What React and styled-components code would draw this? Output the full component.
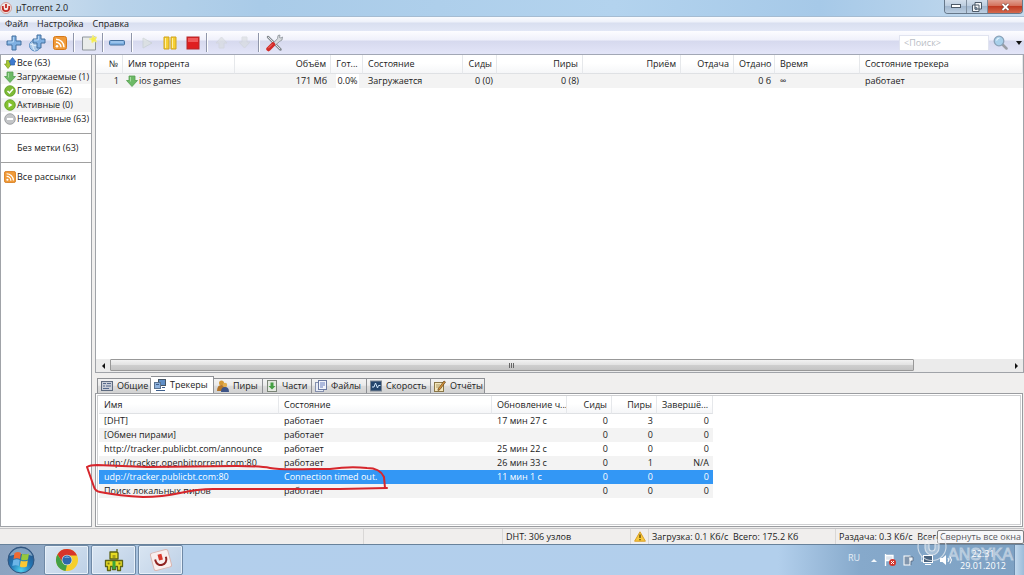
import React from "react";
import styled, { createGlobalStyle } from "styled-components";

const GlobalStyle = createGlobalStyle`
  *, *::before, *::after { box-sizing: border-box; }
  body { margin: 0; background: #f0efee; }
  body, button, input, table {
    font-family: "Open Sans", "Noto Sans", sans-serif;
    font-size: 9px;
    line-height: 14px;
    color: #222;
  }
  button { margin: 0; padding: 0; border: 0; background: none; text-align: left; white-space: nowrap; }
  svg { display: block; flex: none; }
`;

const Desktop = styled.div`
  display: flex;
  flex-direction: column;
  min-height: 100vh;
  overflow: hidden;
`;

/* ---------- window chrome ---------- */
const TitleBar = styled.header`
  display: flex;
  align-items: flex-start;
  height: 17px;
  background: linear-gradient(90deg, #d3e1ef 0, #b9d3ea 110px, #a9cbe8 260px, #b3d3ee 60%, #a6c9e8 80%, #c6dbee 100%);
  border-bottom: 1px solid #a5bcd2;
`;
const TitleText = styled.h1`
  flex: 1;
  margin: 0;
  padding-left: 4px;
  font-size: 9px;
  font-weight: 400;
  line-height: 16px;
`;
const TitleIcon = styled.span`
  padding-top: 2px;
`;
const WindowButtons = styled.div`
  display: flex;
  margin-right: 1px;
  border: 1px solid #66788a;
  border-top: 0;
  border-radius: 0 0 4px 4px;
  overflow: hidden;
`;
const WindowButton = styled.button`
  display: flex;
  align-items: center;
  justify-content: center;
  width: ${(p) => (p.$close ? 35 : 21)}px;
  height: 13px;
  border-left: ${(p) => (p.$first ? 0 : "1px solid #7f8e9e")};
  background: ${(p) =>
    p.$close
      ? "linear-gradient(#e0a193, #d4705b 45%, #c03a22 50%, #d4694d)"
      : "linear-gradient(#d3dfec, #bccddf 45%, #a2b7ce 50%, #bccfe2)"};
`;
const MenuBar = styled.nav`
  display: flex;
  gap: 9px;
  height: 14px;
  padding-left: 5px;
  background: linear-gradient(#fafbfe 0, #eef1fa 5px, #d9dff0 6px, #e2e7f6);
`;
const MenuItem = styled.button`
  line-height: 14px;
`;
const Toolbar = styled.div`
  display: flex;
  align-items: center;
  height: 24px;
  padding: 0 2px;
  background: linear-gradient(#fdfdff 0, #eff0fb 9px, #d6d9ee 10px, #e3e5f8);
  border-bottom: 1px solid #a2a7b5;
`;
const ToolButton = styled.button`
  display: flex;
  align-items: center;
  justify-content: center;
  width: 23px;
  height: 20px;
  opacity: ${(p) => (p.disabled ? 0.6 : 1)};
`;
const ToolSeparator = styled.span`
  width: 6px;
  height: 19px;
  background: linear-gradient(90deg, transparent 2px, #8f96aa 2px, #8f96aa 3px, #fff 3px, #fff 4px, transparent 4px);
`;
const Spacer = styled.span`
  flex: 1;
`;
const SearchBox = styled.input`
  width: 90px;
  height: 16px;
  padding: 0 4px;
  border: 1px solid #e1e4f0;
  background: #fff;
  outline: 0;
  &::placeholder { color: #b9bdc5; opacity: 1; }
`;
const SearchButton = styled.button`
  display: flex;
  align-items: center;
  gap: 8px;
  margin-left: 4px;
`;

/* ---------- body ---------- */
const Body = styled.div`
  display: flex;
  flex: 1;
  gap: 3px;
  background: #f0efee;
`;
const Sidebar = styled.aside`
  width: 92px;
  padding-top: 1px;
  margin-bottom: 1px;
  background: #fff;
  border: 1px solid #a0a3a8;
  border-top: 0;
`;
const SideItem = styled.button`
  display: flex;
  align-items: center;
  gap: 1px;
  width: 100%;
  height: 14px;
  padding-left: ${(p) => (p.$plain ? 16 : 3)}px;
  background: ${(p) => (p.$shade ? "#f4f4f4" : "transparent")};
`;
const SideRule = styled.hr`
  height: 1px;
  margin: 7px 0;
  border: 0;
  background: #a0a0a0;
`;
const Main = styled.main`
  display: flex;
  flex-direction: column;
  flex: 1;
  min-width: 0;
`;
const TorrentPane = styled.section`
  display: flex;
  flex-direction: column;
  flex: 1;
  background: #fff;
  border: 1px solid #a0a3a8;
  border-top: 0;
`;
const PaneFill = styled.div`
  flex: 1;
`;

const Table = styled.table`
  width: ${(p) => (p.$width ? p.$width + "px" : "100%")};
  border-collapse: separate;
  border-spacing: 0;
  table-layout: fixed;
  th, td {
    padding: 0 4px 0 5px;
    font-weight: 400;
    white-space: nowrap;
    overflow: hidden;
  }
`;
const HeadCell = styled.th`
  height: ${(p) => p.$height}px;
  text-align: ${(p) => p.$align || "left"};
  background: linear-gradient(#fff 45%, #f5f6f8);
  border-right: 1px solid #e6e8eb;
  border-bottom: 1px solid #dfe1e4;
`;
const Cell = styled.td`
  height: 14px;
  text-align: ${(p) => p.$align || "left"};
`;
const Row = styled.tr`
  background: ${(p) => (p.$selected ? "#3397f5" : p.$shade ? "#f3f3f3" : "#fff")};
  td { color: ${(p) => (p.$selected ? "#fff" : "#222")}; }
`;
const NameWithIcon = styled.span`
  display: flex;
  align-items: center;
  gap: 1px;
  margin-left: -2px;
`;
const Progress = styled.span`
  display: block;
  background: #fff;
`;

const ScrollBar = styled.div`
  display: flex;
  height: 13px;
  background: #ebebeb;
`;
const ScrollArrow = styled.button`
  display: flex;
  align-items: center;
  justify-content: center;
  width: 14px;
`;
const ScrollTrack = styled.div`
  flex: 1;
  display: flex;
`;
const ScrollThumb = styled.div`
  display: flex;
  align-items: center;
  justify-content: center;
  width: 89.4%;
  margin-bottom: 1px;
  border: 1px solid #989898;
  border-radius: 1px;
  background: linear-gradient(#f2f2f2, #e3e3e3 45%, #cfcfcf 50%, #c4c4c4);
`;

const DetailPane = styled.section`
  padding-top: 3px;
`;
const TabStrip = styled.div`
  display: flex;
  align-items: flex-end;
  height: 17px;
  padding-left: 2px;
`;
const Tab = styled.button`
  display: flex;
  align-items: center;
  gap: 4px;
  width: ${(p) => p.$width}px;
  height: ${(p) => (p.$active ? 17 : 15)}px;
  padding-left: 3px;
  border: 1px solid #8e9094;
  border-bottom: 0;
  border-left-width: ${(p) => (p.$first ? 1 : 0)}px;
  background: ${(p) => (p.$active ? "#fff" : "linear-gradient(#f3f3f3, #ebebeb 45%, #dcdcdc 50%, #d2d2d2)")};
`;
const TrackerPanel = styled.div`
  position: relative;
  height: 134px;
  margin: 0 1px 1px 0;
  padding: 2px 3px;
  background: #fff;
  border: 1px solid #9a9ca0;
  outline: 1px solid #cfd0d2;
  outline-offset: -3px;
`;
const Marker = styled.svg`
  position: absolute;
  left: -12px;
  top: 66px;
  overflow: visible;
  pointer-events: none;
`;

/* ---------- status bar ---------- */
const StatusBar = styled.footer`
  display: flex;
  position: relative;
  height: 17px;
  background: #f0eeed;
  border-top: 1px solid #c4c4c6;
  border-bottom: 1px solid #68829b;
`;
const StatusCell = styled.div`
  display: flex;
  align-items: center;
  ${(p) => (p.$grow ? "flex: 1;" : `width: ${p.$width}px;`)}
  padding-left: 3px;
  border-right: 1px solid #d9d7d6;
  white-space: pre;
  overflow: hidden;
`;
const Tooltip = styled.div`
  position: absolute;
  right: 0;
  bottom: 0;
  padding: 0 2px;
  border: 1px solid #7e7e80;
  border-radius: 2px;
  background: #f7f7f9;
  color: #5a5a60;
  line-height: 12px;
  white-space: nowrap;
`;

/* ---------- taskbar ---------- */
const TaskBar = styled.footer`
  display: flex;
  position: relative;
  gap: 2px;
  height: 30px;
  background: linear-gradient(90deg, #8ca3c0 0, #8fa8c5 44px, #b3cfec 182px, #b2cfec 76%, #86a9cb 84%, #7da1c3 100%);
`;
const StartButton = styled.button`
  display: flex;
  justify-content: center;
  align-items: center;
  width: 42px;
`;
const TaskButton = styled.button`
  display: flex;
  align-items: center;
  justify-content: center;
  width: 45px;
  border: 1px solid #6f89a6;
  border-radius: 2px;
  box-shadow: inset 0 0 0 1px #e7f0f9;
  background: linear-gradient(135deg, #d9e5f2, #bdd0e6);
`;
const Tray = styled.div`
  display: flex;
  align-items: center;
  gap: 7px;
  color: #fff;
`;
const Language = styled.span`
  margin-right: 4px;
  color: #e6eef6;
  line-height: 18px;
  padding-bottom: 4px;
`;
const Clock = styled.time`
  width: 46px;
  margin-right: 6px;
  white-space: nowrap;
  text-align: center;
  color: #fff;
  line-height: 12px;
`;
const ShowDesktop = styled.button`
  width: 10px;
  border-left: 1px solid #6b8cae;
  background: linear-gradient(90deg, #c2d9ee, #9cbcd9);
`;
const Watermark = styled.div`
  position: absolute;
  right: 11px;
  top: -16px;
  display: flex;
  align-items: flex-end;
  color: rgba(255, 255, 255, 0.2);
  font-family: "Liberation Sans", sans-serif;
  font-size: 16px;
  line-height: 20px;
  -webkit-text-stroke: 1px rgba(235, 240, 246, 0.5);
  pointer-events: none;
`;

/* ---------- icons ---------- */
const Logo = ({ size = 11 }) => (
  <svg width={size} height={size} viewBox="0 0 12 12">
    <circle cx="6" cy="6" r="5.5" fill="#f3e9e7" stroke="#c98a84" strokeWidth=".8" />
    <path d="M2.800 4v2a3.200 3.200 0 0 0 6.400 0V4M6 2v4" fill="none" stroke="#c32c25" strokeWidth="1.800" />
  </svg>
);
const Plus = ({ globe }) => (
  <svg width="18" height="18" viewBox="0 0 18 18">
    {globe && (
      <g>
        <circle cx="7" cy="11.500" r="5.500" fill="#a9c8e8" stroke="#5d8fc4" />
        <path d="M2 10q5 3 10 1M6 6q-3 6 1 11" fill="none" stroke="#e3f0fb" />
      </g>
    )}
    <path
      d={globe ? "M9 1h4v4h4v4h-4v5H9V9H5V5h4z" : "M7 2h4v5h5v4h-5v5H7v-5H2V7h5z"}
      fill="#7fb0e2" stroke="#45719f" strokeLinejoin="round"
    />
    <path d={globe ? "M10.500 2v4H6" : "M8.500 3v5H3"} fill="none" stroke="#b5d5f4" />
  </svg>
);
const Rss = ({ size }) => (
  <svg width={size} height={size} viewBox="0 0 14 14">
    <rect x=".5" y=".5" width="13" height="13" rx="2" fill="#f09a38" stroke="#d57819" />
    <circle cx="4" cy="10.200" r="1.300" fill="#fff" />
    <path d="M3 6.300a5 5 0 0 1 5 5M3 3.200a8 8 0 0 1 8 8" fill="none" stroke="#fff" strokeWidth="1.400" />
  </svg>
);
const NewDoc = () => (
  <svg width="16" height="16" viewBox="0 0 16 16">
    <path d="M1.500 2h13v13h-13z" fill="#e9ecea" stroke="#8f969c" />
    <path d="M12 0l1 2.500 3-.5-1.500 2.500L16 7l-3-.5L11 8l-.5-3L8 4l3-1z" fill="#f6ee4a" stroke="#f3f08e" strokeWidth=".8" />
  </svg>
);
const Minus = () => (
  <svg width="17" height="6" viewBox="0 0 17 6">
    <rect x=".5" y=".5" width="15" height="4.500" rx="1" fill="#7fb0e2" stroke="#45719f" />
    <path d="M2 2h12" stroke="#b5d5f4" />
  </svg>
);
const Play = () => (
  <svg width="12" height="12" viewBox="0 0 12 12">
    <path d="M2 1l9 5-9 5z" fill="#dde3dc" stroke="#c4cdca" />
  </svg>
);
const Pause = () => (
  <svg width="14" height="14" viewBox="0 0 14 14">
    <path d="M1 1h5v12H1zM8 1h5v12H8z" fill="#f6cf32" stroke="#cfa31d" />
    <path d="M2.500 2v10M9.500 2v10" stroke="#fff0a0" />
  </svg>
);
const Stop = () => (
  <svg width="14" height="14" viewBox="0 0 14 14">
    <rect x="1" y="1" width="12" height="12" fill="#df1f20" stroke="#b3292a" />
    <path d="M2 2h10v4H2z" fill="#f0595a" />
  </svg>
);
const Move = ({ down }) => (
  <svg width="13" height="13" viewBox="0 0 13 13">
    <path d={down ? "M6.500 12L1 6h3V1h5v5h3z" : "M6.500 1L1 7h3v5h5V7h3z"} fill="#d9ddde" stroke="#cfd3d6" />
  </svg>
);
const Tools = () => (
  <svg width="18" height="18" viewBox="0 0 18 18">
    <path d="M3 3l8 8 4.500 4.500" stroke="#858b91" strokeWidth="2.500" strokeLinecap="round" />
    <path d="M3 3l12 12" stroke="#e0e3e6" strokeWidth="1" />
    <path d="M8.500 9l4-4.500L13 1.500l2-.5-.5 2.500 1.500.5 1.500-1-.5 3-2.500 1.500-4.500 4z" fill="#d7dade" stroke="#80868c" strokeWidth=".7" />
    <path d="M8 10.500L3.500 15" stroke="#d32a27" strokeWidth="4.500" strokeLinecap="round" />
    <path d="M7 10.500L3.500 14" stroke="#ef7a72" strokeWidth="1" strokeLinecap="round" />
  </svg>
);
const Magnifier = () => (
  <svg width="15" height="15" viewBox="0 0 15 15">
    <path d="M9 9l4.500 4.500" stroke="#9a9ea5" strokeWidth="2.500" strokeLinecap="round" />
    <circle cx="6" cy="6" r="4.800" fill="#a8d0ea" stroke="#8aa2b8" strokeWidth="1.300" />
    <path d="M3.500 5.500q1-2.500 3-2.500" fill="none" stroke="#e9f6ff" strokeWidth="1.200" />
  </svg>
);
const Triangle = ({ d, w = 6, h = 4, fill = "#111" }) => (
  <svg width={w} height={h} viewBox={`0 0 ${w} ${h}`}><path d={d} fill={fill} /></svg>
);
const Down = ({ size = 12 }) => (
  <svg width={size} height={size} viewBox="0 0 12 12">
    <path d="M3 1h6v4.500h2.500L6 11.500.5 5.500H3z" fill="#6dba66" stroke="#559f50" strokeWidth=".8" strokeLinejoin="round" />
    <path d="M4.500 2v4.500" stroke="#a6dba0" />
  </svg>
);
const AllIcon = () => (
  <svg width="12" height="12" viewBox="0 0 12 12">
    <path d="M2.500 3.500h3v3.500H7.500L4 11.500.5 7h2z" fill="#a8c833" stroke="#7a9a23" strokeWidth=".7" />
    <path d="M6.500 8V5H5L8.500.5 12 5h-1.500v3z" fill="#3d7bd0" stroke="#2b5da6" strokeWidth=".7" />
  </svg>
);
const Dot = ({ color, edge, children }) => (
  <svg width="12" height="12" viewBox="0 0 12 12">
    <circle cx="6" cy="6" r="5.300" fill={color} stroke={edge} strokeWidth=".8" />
    {children}
  </svg>
);
const tabIcons = {
  general: (
    <g>
      <rect x=".5" y="1.500" width="11" height="9" fill="#c9ced8" stroke="#5f6c80" />
      <path d="M2 3.500h3M6 3.500h4M2 6h2M5 6h5M2 8.500h6" stroke="#54698c" />
    </g>
  ),
  trackers: (
    <g>
      <rect x="4.500" y=".5" width="7" height="6" fill="#5f8ec6" stroke="#456" />
      <rect x=".5" y="3.500" width="6" height="6" fill="#8db1dc" stroke="#5b7391" />
      <path d="M2 11.500h9M8 8.500h3M2 5.500h3" stroke="#3f5f8c" />
    </g>
  ),
  peers: (
    <g>
      <circle cx="4.500" cy="3" r="2.500" fill="#d79a35" />
      <path d="M0 11q0-6 4.500-6T9 11z" fill="#b3752a" />
      <circle cx="8" cy="5" r="2.200" fill="#e2ae4f" />
      <path d="M4 12q0-5 4-5t4 5z" fill="#3d5488" />
    </g>
  ),
  pieces: (
    <g>
      <rect x="1.500" y=".5" width="9" height="11" fill="#e3e9e0" stroke="#7c8578" />
      <path d="M4.500 2.500h3V6h2L6 9.500 2.500 6h2z" fill="#45a043" />
    </g>
  ),
  files: (
    <g>
      <rect x=".5" y="2.500" width="8" height="9" fill="#e8ecf6" stroke="#8590ad" />
      <rect x="3.500" y=".5" width="8" height="9" fill="#f2f4fb" stroke="#6c7aa2" />
      <path d="M5 3h5M5 5h5M5 7h3" stroke="#6a80c0" />
    </g>
  ),
  speed: (
    <g>
      <rect x=".5" y="1" width="11" height="10" fill="#24456c" stroke="#7e8894" />
      <path d="M2 7h2l1.500-4 2 5 1-2.500h2" fill="none" stroke="#cfe6fa" />
    </g>
  ),
  log: (
    <g>
      <rect x=".5" y="2.500" width="9" height="9" fill="#f4e7bd" stroke="#8a7748" />
      <path d="M2 5h4M2 7h3" stroke="#b09a62" />
      <path d="M4 9l6-8 1.500 1L6 9.500 4 10.500z" fill="#d9963a" stroke="#62421c" strokeWidth=".7" />
    </g>
  ),
};
const Warning = () => (
  <svg width="12" height="11" viewBox="0 0 12 11">
    <path d="M6 .8l5.400 9.400H.6z" fill="#f8c93a" stroke="#d99f29" strokeLinejoin="round" />
    <path d="M6 3.500v3.500M6 8v1.200" stroke="#4a3608" strokeWidth="1.200" />
  </svg>
);
const StartOrb = () => (
  <svg width="28" height="28" viewBox="0 0 28 28">
    <defs>
      <radialGradient id="orb" cx=".5" cy=".9" r=".9">
        <stop offset="0" stopColor="#4fd0ee" />
        <stop offset=".45" stopColor="#2376b5" />
        <stop offset="1" stopColor="#294f7e" />
      </radialGradient>
    </defs>
    <circle cx="14" cy="14" r="13" fill="url(#orb)" stroke="#31557f" />
    <path d="M2.500 10Q6 2 14 2t11.500 8q-11-4-23 0z" fill="#c9dcea" opacity=".55" />
    <path d="M7.500 7q3.500-2 6.500 0l-1 6q-3-1.700-6.500 0z" fill="#ef6a31" />
    <path d="M15 7.500q3 1.700 7 0l-1 6q-4 1.700-7 0z" fill="#95c83d" />
    <path d="M6.300 14q3.500-1.700 6.500 0l-1 6q-3-1.700-6.500 0z" fill="#6cb5e8" />
    <path d="M13.800 14.500q3 1.700 7 0l-1 6q-4 1.700-7 0z" fill="#fbc833" />
  </svg>
);
const Chrome = () => (
  <svg width="24" height="24" viewBox="0 0 24 24">
    <circle cx="12" cy="12" r="11" fill="#f5cf2b" />
    <path d="M2.470 6.500A11 11 0 0 1 22 7.500H12L7.700 14.500z" fill="#d8352a" />
    <path d="M2.470 6.500L7.700 14.500 12 17l-1.500 6A11 11 0 0 1 2.470 6.500z" fill="#43a047" />
    <circle cx="12" cy="12" r="5.300" fill="#dfe3d8" />
    <circle cx="12" cy="12" r="4.600" fill="#2d68ad" />
    <path d="M9 10q3-3 6 0-3-1-6 0z" fill="#9cc6ec" />
  </svg>
);
const Robot = () => (
  <svg width="20" height="24" viewBox="0 0 20 24">
    <path
      d="M13 4V1M6 4h7l1 1v6H6z"
      fill="#e8dc24" stroke="#5d6416" strokeWidth="1.300" strokeLinejoin="round"
    />
    <path d="M1.500 12.500h17v6h-2v4h-3v-4h-2v3h-3v-3h-2v4h-3v-4h-2z" fill="#e8dc24" stroke="#5d6416" strokeWidth="1.300" strokeLinejoin="round" />
    <path d="M8.500 7h3v3h-3z" fill="#a8a11c" />
    <path d="M8.500 13h3v8h-3z" fill="#3ba53b" />
    <path d="M3.500 14.500h2v2h-2zM14.500 14.500h2v2h-2z" fill="#7f7a12" />
  </svg>
);
const TorrentTask = () => (
  <svg width="24" height="24" viewBox="0 0 24 24">
    <rect x="3" y="3" width="18" height="18" rx="2" transform="rotate(-15 12 12)" fill="#f8efee" stroke="#d9b7b3" />
    <g transform="rotate(-15 12 12)">
      <path d="M6.500 10v1.500a5.500 5.500 0 0 0 11 0V10" fill="none" stroke="#8f2320" strokeWidth="2" />
      <path d="M12 6v6" stroke="#d93a2e" strokeWidth="4" />
    </g>
  </svg>
);

/* ---------- data ---------- */
const torrentColumns = [
  { label: "№", width: 27, align: "right" },
  { label: "Имя торрента", width: 112 },
  { label: "Объём", width: 96, align: "right" },
  { label: "Гот...", width: 32, align: "center" },
  { label: "Состояние", width: 100 },
  { label: "Сиды", width: 34, align: "right" },
  { label: "Пиры", width: 86, align: "right" },
  { label: "Приём", width: 98, align: "right" },
  { label: "Отдача", width: 53, align: "right" },
  { label: "Отдано", width: 41, align: "right" },
  { label: "Время", width: 85 },
  { label: "Состояние трекера" },
];
const torrent = [
  "1",
  <NameWithIcon><Down />ios games</NameWithIcon>,
  "171 Мб",
  <Progress>0.0%</Progress>,
  "Загружается", "0 (0)", "0 (8)", "", "", "0 б", "∞", "работает",
];
const trackerColumns = [
  { label: "Имя", width: 180 },
  { label: "Состояние", width: 213 },
  { label: "Обновление ч...", width: 75 },
  { label: "Сиды", width: 45, align: "right" },
  { label: "Пиры", width: 45, align: "right" },
  { label: "Завершё...", width: 56, align: "right" },
];
const trackers = [
  ["[DHT]", "работает", "17 мин 27 с", "0", "3", "0"],
  ["[Обмен пирами]", "работает", "", "0", "0", "0"],
  ["http://tracker.publicbt.com/announce", "работает", "25 мин 22 с", "0", "0", "0"],
  ["udp://tracker.openbittorrent.com:80", "работает", "26 мин 33 с", "0", "1", "N/A"],
  ["udp://tracker.publicbt.com:80", "Connection timed out.", "11 мин 1 с", "0", "0", "0"],
  ["Поиск локальных пиров", "работает", "", "0", "0", "0"],
];
const tabs = [
  { label: "Общие", icon: "general", width: 54 },
  { label: "Трекеры", icon: "trackers", width: 63 },
  { label: "Пиры", icon: "peers", width: 49 },
  { label: "Части", icon: "pieces", width: 49 },
  { label: "Файлы", icon: "files", width: 55 },
  { label: "Скорость", icon: "speed", width: 64 },
  { label: "Отчёты", icon: "log", width: 54 },
];

function DataTable({ columns, rows, width, headHeight, selected, shadeFrom }) {
  return (
    <Table $width={width}>
      <colgroup>
        {columns.map((c) => <col key={c.label} width={c.width} />)}
      </colgroup>
      <thead>
        <tr>
          {columns.map((c) => (
            <HeadCell key={c.label} scope="col" $align={c.align} $height={headHeight}>{c.label}</HeadCell>
          ))}
        </tr>
      </thead>
      <tbody>
        {rows.map((row, r) => (
          <Row key={r} $selected={r === selected} $shade={r % 2 === shadeFrom}>
            {row.map((value, i) => <Cell key={i} $align={columns[i].align}>{value}</Cell>)}
          </Row>
        ))}
      </tbody>
    </Table>
  );
}

export default function App() {
  return (
    <Desktop>
      <GlobalStyle />
      <TitleBar>
        <TitleIcon><Logo size={12} /></TitleIcon>
        <TitleText>µTorrent 2.0</TitleText>
        <WindowButtons>
          <WindowButton $first aria-label="Свернуть">
            <svg width="10" height="5"><rect x=".5" y=".5" width="9" height="3" fill="#fff" stroke="#4d5a68" /></svg>
          </WindowButton>
          <WindowButton aria-label="Развернуть">
            <svg width="10" height="10" viewBox="0 0 10 10">
              <path d="M3 .5h6.500V7H3zM.5 3H7v6.500H.5z" fill="#f4f6f8" stroke="#4d5a68" />
              <path d="M3 5.500h2v2H3z" fill="#7890a8" stroke="#4d5a68" strokeWidth=".6" />
            </svg>
          </WindowButton>
          <WindowButton $close aria-label="Закрыть">
            <svg width="9" height="8" viewBox="0 0 9 8">
              <path d="M1.500 1l6 6M7.500 1l-6 6" stroke="#63352f" strokeWidth="3" />
              <path d="M1.500 1l6 6M7.500 1l-6 6" stroke="#fff" strokeWidth="1.800" />
            </svg>
          </WindowButton>
        </WindowButtons>
      </TitleBar>
      <MenuBar>
        <MenuItem>Файл</MenuItem>
        <MenuItem>Настройка</MenuItem>
        <MenuItem>Справка</MenuItem>
      </MenuBar>
      <Toolbar>
        <ToolButton aria-label="Добавить торрент"><Plus /></ToolButton>
        <ToolButton aria-label="Добавить по ссылке"><Plus globe /></ToolButton>
        <ToolButton aria-label="Добавить рассылку"><Rss size={14} /></ToolButton>
        <ToolSeparator />
        <ToolButton aria-label="Создать торрент"><NewDoc /></ToolButton>
        <ToolSeparator />
        <ToolButton aria-label="Удалить"><Minus /></ToolButton>
        <ToolSeparator />
        <ToolButton aria-label="Запустить" disabled><Play /></ToolButton>
        <ToolButton aria-label="Пауза"><Pause /></ToolButton>
        <ToolButton aria-label="Остановить"><Stop /></ToolButton>
        <ToolSeparator />
        <ToolButton aria-label="Вверх" disabled><Move /></ToolButton>
        <ToolButton aria-label="Вниз" disabled><Move down /></ToolButton>
        <ToolSeparator />
        <ToolButton aria-label="Настройки"><Tools /></ToolButton>
        <Spacer />
        <SearchBox type="text" placeholder="<Поиск>" aria-label="Поиск" />
        <SearchButton aria-label="Искать">
          <Magnifier />
          <Triangle d="M0 0h6L3 4z" />
        </SearchButton>
      </Toolbar>

      <Body>
        <Sidebar>
          <SideItem><AllIcon />Все (63)</SideItem>
          <SideItem $shade><Down />Загружаемые (1)</SideItem>
          <SideItem>
            <Dot color="#7dba36" edge="#5c9a22"><path d="M3.500 6l2 2 3.500-4" fill="none" stroke="#fff" strokeWidth="1.500" /></Dot>
            Готовые (62)
          </SideItem>
          <SideItem $shade>
            <Dot color="#83c02f" edge="#5c9a22"><path d="M4.500 3.500L8.500 6l-4 2.500z" fill="#fff" /></Dot>
            Активные (0)
          </SideItem>
          <SideItem>
            <Dot color="#c3c5c7" edge="#8f9295"><path d="M3 5h6v2H3z" fill="#fff" /></Dot>
            Неактивные (63)
          </SideItem>
          <SideRule />
          <SideItem $plain>Без метки (63)</SideItem>
          <SideRule />
          <SideItem><Rss size={12} />Все рассылки</SideItem>
        </Sidebar>

        <Main>
          <TorrentPane>
            <DataTable columns={torrentColumns} rows={[torrent]} headHeight={19} shadeFrom={0} />
            <PaneFill />
            <ScrollBar>
              <ScrollArrow aria-label="Прокрутить влево"><Triangle d="M3 0v6L0 3z" w={3} h={6} /></ScrollArrow>
              <ScrollTrack>
                <ScrollThumb>
                  <svg width="7" height="5"><path d="M1.500 0v5M3.500 0v5M5.500 0v5" stroke="#666" /></svg>
                </ScrollThumb>
              </ScrollTrack>
              <ScrollArrow aria-label="Прокрутить вправо"><Triangle d="M0 0v6l3-3z" w={3} h={6} /></ScrollArrow>
            </ScrollBar>
          </TorrentPane>

          <DetailPane>
            <TabStrip role="tablist">
              {tabs.map((t, i) => (
                <Tab key={t.label} role="tab" aria-selected={i === 1} $active={i === 1} $first={i === 0} $width={t.width}>
                  <svg width="12" height="12" viewBox="0 0 12 12">{tabIcons[t.icon]}</svg>
                  {t.label}
                </Tab>
              ))}
            </TabStrip>
            <TrackerPanel>
              <DataTable columns={trackerColumns} rows={trackers} width={614} headHeight={18} selected={4} shadeFrom={1} />
              <Marker width="306" height="40" viewBox="84 460 306 40">
                <path
                  d="M87 467Q90 465 97 465L147 467 237 466Q260 466 270 468T313 469L330 469Q350 466 367 468 380 468 384 477L385 488M387 488L340 489H213Q198 489 180 493T143 497Q120 496 100 492 95 491 94 487L87 467"
                  fill="none" stroke="#d6262c" strokeWidth="2" strokeLinecap="round" strokeLinejoin="round"
                />
              </Marker>
            </TrackerPanel>
          </DetailPane>
        </Main>
      </Body>

      <StatusBar>
        <StatusCell $grow />
        <StatusCell $width={139} />
        <StatusCell $width={128}>DHT: 306 узлов</StatusCell>
        <StatusCell $width={18}><Warning /></StatusCell>
        <StatusCell $width={187}>{"Загрузка: 0.1 Кб/с  Всего: 175.2 Кб"}</StatusCell>
        <StatusCell $width={188}>{"Раздача: 0.3 Кб/с  Всего:"}</StatusCell>
        <Tooltip role="tooltip">Свернуть все окна</Tooltip>
      </StatusBar>

      <TaskBar>
        <StartButton aria-label="Пуск"><StartOrb /></StartButton>
        <TaskButton aria-label="Chrome"><Chrome /></TaskButton>
        <TaskButton aria-label="QIP"><Robot /></TaskButton>
        <TaskButton aria-label="µTorrent"><TorrentTask /></TaskButton>
        <Spacer />
        <Tray>
          <Language>RU</Language>
          <Triangle d="M0 3h6L3 0z" w={6} h={3} fill="#f3f8fc" />
          <svg width="12" height="12" viewBox="0 0 12 12">
            <path d="M1.500 0v12M2 1.500h7v5H2" fill="#dfe6ee" stroke="#fff" strokeWidth="1.300" />
            <circle cx="8.500" cy="8.500" r="3.500" fill="#d3352c" />
            <path d="M7 7l3 3M10 7l-3 3" stroke="#fff" />
          </svg>
          <svg width="11" height="12" viewBox="0 0 11 12">
            <rect x="1" y="2" width="6" height="9" fill="#8296ad" stroke="#fff" />
            <path d="M6 3h4v4H8v4" fill="#eef3f8" stroke="#4a5d74" strokeWidth=".7" />
          </svg>
          <svg width="12" height="12" viewBox="0 0 12 12">
            <rect x="2.500" y="1.500" width="9" height="7" fill="#49637f" stroke="#fff" />
            <path d="M0 2v5h2M4 10.500h6" fill="none" stroke="#fff" />
          </svg>
          <svg width="13" height="12" viewBox="0 0 13 12">
            <path d="M0 4h2.500L6 1v10L2.500 8H0z" fill="#fff" />
            <path d="M8 4q1.500 2 0 4M10 2.500q3 3.500 0 7" fill="none" stroke="#fff" />
          </svg>
          <Clock>22:31<br />29.01.2012</Clock>
        </Tray>
        <ShowDesktop aria-label="Свернуть все окна" />
        <Watermark aria-hidden="true">
          <svg width="32" height="36" viewBox="0 0 32 36">
            <g fill="none" stroke="#e6ebf0" strokeOpacity=".75" strokeWidth="1.200">
              <circle cx="16" cy="6" r="4.500" />
              <path d="M8 6a14 14 0 1 0 16 0" />
              <path d="M9 11v8a7 7 0 0 0 14 0v-8h-4v8a3 3 0 0 1-6 0v-8z" fill="#fff" fillOpacity=".3" />
            </g>
          </svg>
          ANSYKA
        </Watermark>
      </TaskBar>
    </Desktop>
  );
}
